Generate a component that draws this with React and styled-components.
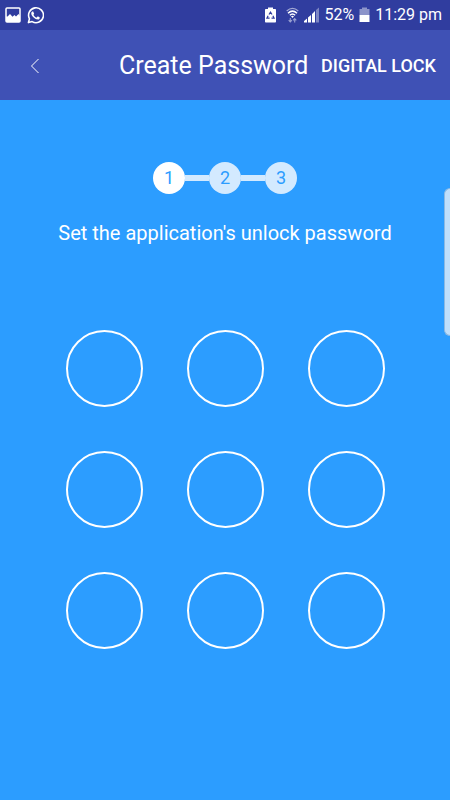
import React from "react";
import styled, { createGlobalStyle } from "styled-components";

const GlobalStyle = createGlobalStyle`
  * { box-sizing: border-box; }
  body { margin: 0; background: #2c9dff; font-family: Roboto, "Noto Sans", sans-serif; }
  button { font: inherit; color: inherit; background: none; border: 0; padding: 0; cursor: pointer; }
`;

const Screen = styled.div`
  position: relative;
  min-height: 100vh;
  display: flex;
  flex-direction: column;
  background: #2c9dff;
  color: #fff;
`;

const StatusBar = styled.div`
  display: flex;
  align-items: center;
  justify-content: space-between;
  height: 30px;
  padding: 0 8px 0 5px;
  background: #303d9f;
`;

const StatusGroup = styled.div`
  display: flex;
  align-items: center;
  gap: ${(p) => p.$gap}px;
`;

const StatusIcon = styled.svg`
  display: block;
  flex: none;
`;

const StatusText = styled.span`
  font-size: 16px;
  line-height: 30px;
  white-space: nowrap;
`;

const Header = styled.header`
  display: grid;
  grid-template-columns: 105px 1fr auto;
  align-items: center;
  height: 70px;
  padding: 2px 14px 0 14px;
  background: #3f51b5;
`;

const BackButton = styled.button`
  display: flex;
  align-items: center;
  justify-content: center;
  width: 42px;
  height: 42px;
`;

const Title = styled.h1`
  margin: 0;
  font-size: 25px;
  font-weight: 400;
  line-height: 32px;
  white-space: nowrap;
`;

const ModeButton = styled.button`
  && {
    font-size: 18px;
    font-weight: 500;
    line-height: 32px;
    white-space: nowrap;
  }
`;

const Main = styled.main`
  display: flex;
  flex-direction: column;
  align-items: center;
  padding: 62px 16px 32px;
`;

const Steps = styled.ol`
  display: flex;
  align-items: center;
  margin: 0;
  padding: 0;
  list-style: none;
`;

const Step = styled.li`
  display: flex;
  align-items: center;

  & + &::before {
    content: "";
    width: 24px;
    height: 6px;
    background: #d3eaff;
  }
`;

const StepNumber = styled.span`
  display: flex;
  align-items: center;
  justify-content: center;
  width: 32px;
  height: 32px;
  border-radius: 50%;
  background: ${(p) => (p.$active ? "#fff" : "#d3eaff")};
  color: #2c9dff;
  font-size: 18px;
  line-height: 32px;
`;

const Prompt = styled.p`
  margin: 23px 0 0;
  font-size: 20px;
  line-height: 32px;
  text-align: center;
`;

const PatternGrid = styled.div`
  display: grid;
  grid-template-columns: repeat(3, 77px);
  gap: 44px;
  margin-top: 81px;
`;

const PatternDot = styled.button`
  && {
    width: 77px;
    height: 77px;
    border: 2px solid #fff;
    border-radius: 50%;
  }
`;

const EdgeHandle = styled.div`
  position: absolute;
  top: 188px;
  right: 0;
  width: 6px;
  height: 148px;
  border: 1px solid #8cb9e2;
  border-right: 0;
  border-radius: 6px 0 0 6px;
  background: #bfdffc;
`;

const PictureIcon = () => (
  <StatusIcon width="16" height="16" viewBox="0 0 16 16" aria-hidden="true">
    <rect x="1" y="1" width="14" height="14" rx="1" fill="none" stroke="#fff" strokeWidth="1.500" />
    <path d="M1 15V9.500h1.500L5 7l2.500 2.800L9.500 8l1.500 1.500L13.500 7 15 9v6z" fill="#fff" />
  </StatusIcon>
);

const WhatsAppIcon = () => (
  <StatusIcon width="17" height="17" viewBox="0 0 24 24" fill="#fff" aria-hidden="true">
    <path d="M17.472 14.382c-.297-.149-1.758-.867-2.030-.967-.273-.099-.471-.148-.670.150-.197.297-.767.966-.940 1.164-.173.199-.347.223-.644.075-.297-.150-1.255-.463-2.390-1.475-.883-.788-1.480-1.761-1.653-2.059-.173-.297-.018-.458.130-.606.134-.133.298-.347.446-.520.149-.174.198-.298.298-.497.099-.198.050-.371-.025-.520-.075-.149-.669-1.612-.916-2.207-.242-.579-.487-.500-.669-.510-.173-.008-.371-.010-.570-.010-.198 0-.520.074-.792.372-.272.297-1.040 1.016-1.040 2.479 0 1.462 1.065 2.875 1.213 3.074.149.198 2.096 3.200 5.077 4.487.709.306 1.262.489 1.694.625.712.227 1.360.195 1.871.118.571-.085 1.758-.719 2.006-1.413.248-.694.248-1.289.173-1.413-.074-.124-.272-.198-.570-.347z" />
    <path d="M2 22l1.500-5.400A10.500 10.500 0 1 1 7.300 20.600z" fill="none" stroke="#fff" strokeWidth="2.200" strokeLinejoin="round" />
  </StatusIcon>
);

const SaverIcon = () => (
  <StatusIcon width="11" height="16" viewBox="0 0 11 16" aria-hidden="true">
    <path d="M3 .5h5V2h2.200a.8.800 0 0 1 .8.800v11.900a.8.800 0 0 1-.8.800H.8a.8.800 0 0 1-.8-.8V2.800A.8.800 0 0 1 .8 2H3z" fill="#fff" />
    <path d="M4 7.500L5.500 5.200 7 7.500M7.900 8.700l1.200 2.500H6.500M4.600 11.200H1.900l1.200-2.500" fill="none" stroke="#303d9f" strokeWidth="1.200" />
  </StatusIcon>
);

const WifiIcon = () => (
  <StatusIcon width="13" height="16" viewBox="0 0 13 16" aria-hidden="true">
    <g fill="none" stroke="#fff">
      <path d="M.7 4Q6.500-1.200 12.300 4" strokeWidth="1.300" opacity=".55" />
      <path d="M2 6.200Q6.500 2 11 6.200" strokeWidth="1.500" />
      <path d="M3.900 8.200Q6.500 5.700 9.100 8.200" strokeWidth="1.500" />
    </g>
    <path d="M5 9.300Q6.500 8 8 9.300L6.500 11z" fill="#fff" />
    <path d="M4.300 11v4M2.700 13.200l1.600 1.800 1.600-1.800M8.700 15.500v-4M7.100 13.300l1.600-1.800 1.600 1.800" fill="none" stroke="#9ba2d2" strokeWidth="1.100" />
  </StatusIcon>
);

const SignalIcon = () => (
  <StatusIcon width="15" height="16" viewBox="0 0 15 16" aria-hidden="true">
    <path d="M0 15.500V14l3-2.500v4zM4 15.500v-5L7 8v7.500zM8 15.500V7l3-3v11.500z" fill="#fff" />
    <path d="M12 15.500V3l3-2.500v15z" fill="#7d86c3" />
  </StatusIcon>
);

const BatteryIcon = () => (
  <StatusIcon width="11" height="16" viewBox="0 0 11 16" aria-hidden="true">
    <path d="M3 .5h5V2h2.500v6H.5V2H3z" fill="#8c94ca" />
    <path d="M.5 8h10v7H.5z" fill="#fff" />
  </StatusIcon>
);

const steps = [1, 2, 3];
const dots = Array.from({ length: 9 }, (_, i) => i + 1);

export default function App() {
  return (
    <>
      <GlobalStyle />
      <Screen>
        <StatusBar>
          <StatusGroup $gap={6}>
            <PictureIcon />
            <WhatsAppIcon />
          </StatusGroup>
          <StatusGroup $gap={5}>
            <StatusGroup $gap={10}>
              <SaverIcon />
              <StatusGroup $gap={5}>
                <WifiIcon />
                <SignalIcon />
              </StatusGroup>
            </StatusGroup>
            <StatusText>52%</StatusText>
            <BatteryIcon />
            <StatusText>11:29 pm</StatusText>
          </StatusGroup>
        </StatusBar>
        <Header>
          <BackButton type="button" aria-label="Back">
            <svg width="10" height="16" viewBox="0 0 10 16" fill="none" stroke="#fff" strokeWidth="1" aria-hidden="true">
              <path d="M8.500 1L1.500 8l7 7" />
            </svg>
          </BackButton>
          <Title>Create Password</Title>
          <ModeButton type="button">DIGITAL LOCK</ModeButton>
        </Header>
        <Main>
          <Steps>
            {steps.map((n) => (
              <Step key={n} aria-current={n === 1 ? "step" : undefined}>
                <StepNumber $active={n === 1}>{n}</StepNumber>
              </Step>
            ))}
          </Steps>
          <Prompt>Set the application's unlock password</Prompt>
          <PatternGrid role="group" aria-label="Unlock pattern">
            {dots.map((n) => (
              <PatternDot key={n} type="button" aria-label={`Dot ${n}`} />
            ))}
          </PatternGrid>
        </Main>
        <EdgeHandle />
      </Screen>
    </>
  );
}
